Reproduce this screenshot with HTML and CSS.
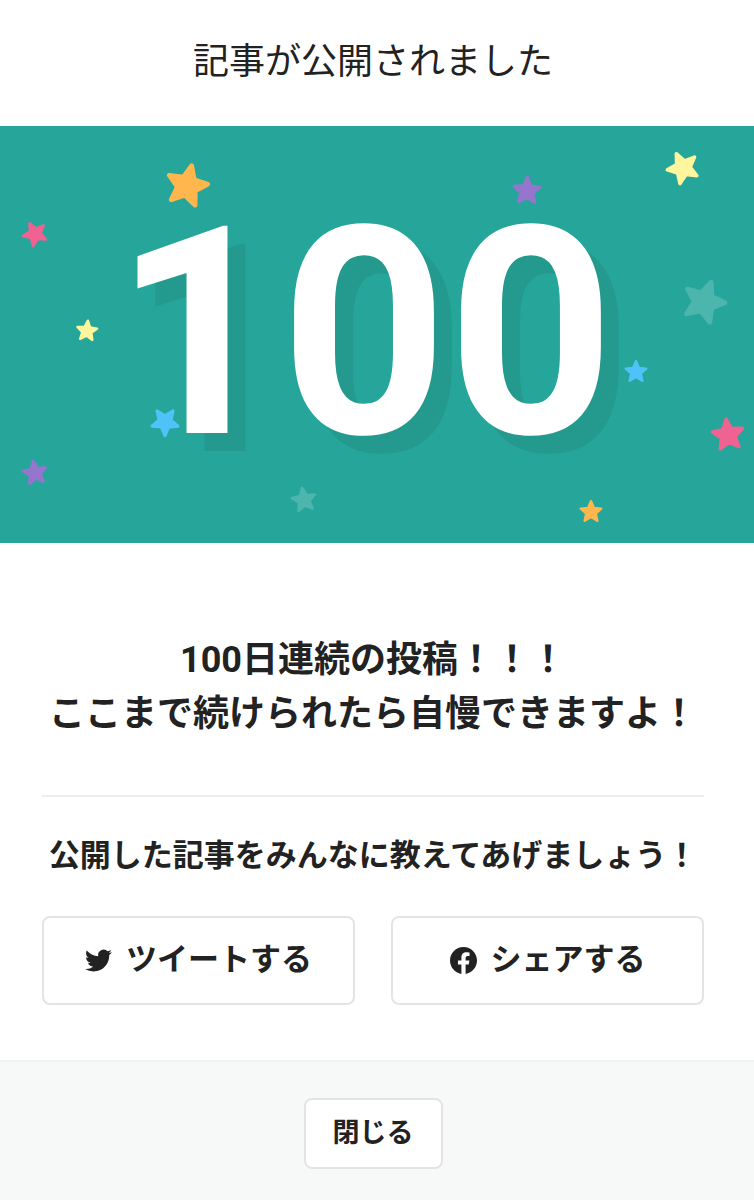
FILE: index.html
```
<!DOCTYPE html>
<html lang="ja">
<head>
    <meta charset="UTF-8">
    <meta name="viewport" content="width=device-width, initial-scale=1.0">
    <title>記事が公開されました</title>
    <link rel="stylesheet" href="styles.css">
</head>
<body>
    <main class="modal">
        <header class="modal-header">
            <h1>記事が公開されました</h1>
        </header>

        <div class="banner">
            <svg class="stars" viewBox="0 0 754 417" preserveAspectRatio="xMidYMid slice" aria-hidden="true">
                <defs>
                    <path id="star" d="M0-18 4.9-6.7 17.1-5.6 7.9 2.6 10.6 14.6 0 8.3-10.6 14.6-7.9 2.6-17.1-5.6-4.9-6.7z"/>
                </defs>
                <use href="#star" class="orange" transform="translate(187 60) rotate(13) scale(1.16)"/>
                <use href="#star" class="pink" transform="translate(35 108) rotate(-27) scale(.67)"/>
                <use href="#star" class="purple" transform="translate(527 65) rotate(2) scale(.76)"/>
                <use href="#star" class="yellow" transform="translate(683 42) rotate(-25) scale(.88)"/>
                <use href="#star" class="pale" transform="translate(704 176) rotate(20) scale(1.17)"/>
                <use href="#star" class="yellow" transform="translate(87 205) rotate(5) scale(.58)"/>
                <use href="#star" class="blue" transform="translate(165 296) rotate(36) scale(.76)"/>
                <use href="#star" class="purple" transform="translate(35 347) rotate(-9) scale(.67)"/>
                <use href="#star" class="pale" transform="translate(304 374) rotate(-9) scale(.67)"/>
                <use href="#star" class="blue" transform="translate(636 246) scale(.6)"/>
                <use href="#star" class="pink" transform="translate(728 309) rotate(-7) scale(.88)"/>
                <use href="#star" class="orange" transform="translate(591 386) scale(.6)"/>
            </svg>
            <p class="count">100</p>
        </div>

        <section class="content">
            <h2>100日連続の投稿！！！<br>ここまで続けられたら自慢できますよ！</h2>

            <div class="share">
                <h3>公開した記事をみんなに教えてあげましょう！</h3>
                <div class="share-buttons">
                    <button type="button" class="button">
                        <svg class="icon" viewBox="0 0 24 24" aria-hidden="true">
                            <path d="M23.953 4.57a10 10 0 01-2.825.775 4.958 4.958 0 002.163-2.723c-.951.555-2.005.959-3.127 1.184a4.92 4.92 0 00-8.384 4.482C7.69 8.095 4.067 6.13 1.64 3.162a4.822 4.822 0 00-.666 2.475c0 1.71.87 3.213 2.188 4.096a4.904 4.904 0 01-2.228-.616v.06a4.923 4.923 0 003.946 4.827 4.996 4.996 0 01-2.212.085 4.936 4.936 0 004.604 3.417 9.867 9.867 0 01-6.102 2.105c-.39 0-.779-.023-1.17-.067a13.995 13.995 0 007.557 2.209c9.053 0 13.998-7.496 13.998-13.985 0-.21 0-.42-.015-.63A9.935 9.935 0 0024 4.59z"/>
                        </svg>
                        ツイートする
                    </button>
                    <button type="button" class="button">
                        <svg class="icon" viewBox="0 0 24 24" aria-hidden="true">
                            <path d="M24 12.073c0-6.627-5.373-12-12-12s-12 5.373-12 12c0 5.99 4.388 10.954 10.125 11.854v-8.385H7.078v-3.47h3.047V9.43c0-3.007 1.792-4.669 4.533-4.669 1.312 0 2.686.235 2.686.235v2.953H15.83c-1.491 0-1.956.925-1.956 1.874v2.25h3.328l-.532 3.47h-2.796v8.385C19.612 23.027 24 18.062 24 12.073z"/>
                        </svg>
                        シェアする
                    </button>
                </div>
            </div>
        </section>

        <footer class="modal-footer">
            <button type="button" class="button button-close">閉じる</button>
        </footer>
    </main>
</body>
</html>
```
FILE: styles.css
```
* {
    box-sizing: border-box;
}

body {
    margin: 0;
    font-family: Roboto, "Noto Sans CJK JP", sans-serif;
    color: #222;
    background-color: #fff;
}

h1,
h2,
h3,
p {
    margin: 0;
}

.modal {
    display: flex;
    flex-direction: column;
    min-height: 100vh;
}

.modal-header {
    padding: 35px 50px 37px 42px;
    text-align: center;
}

h1 {
    font-size: 36px;
    font-weight: 400;
    line-height: 54px;
}

/* Banner */
.banner {
    position: relative;
    display: flex;
    justify-content: center;
    padding: 33px 26px 34px 0;
    overflow: hidden;
    background-color: #26a69a;
}

.stars {
    position: absolute;
    inset: 0;
    width: 100%;
    height: 100%;
    stroke-width: 4px;
    stroke-linejoin: round;
}

.orange { fill: #ffb74d; stroke: #ffb74d; }
.pink { fill: #f06292; stroke: #f06292; }
.purple { fill: #9575cd; stroke: #9575cd; }
.yellow { fill: #fff59d; stroke: #fff59d; }
.blue { fill: #4fc3f7; stroke: #4fc3f7; }
.pale { fill: #4db6ac; stroke: #4db6ac; }

.count {
    position: relative;
    font-size: 291px;
    font-weight: 700;
    line-height: 350px;
    color: #fff;
    text-shadow: 18px 18px 0 #24998d;
}

/* Message and share buttons */
.content {
    padding: 90px 50px 55px 42px;
    text-align: center;
}

h2 {
    font-size: 36px;
    font-weight: 700;
    line-height: 54px;
    white-space: nowrap;
}

.share {
    margin-top: 54px;
    padding-top: 36px;
    border-top: 2px solid #eee;
}

h3 {
    font-size: 31px;
    font-weight: 700;
    line-height: 46px;
    white-space: nowrap;
}

.share-buttons {
    display: grid;
    grid-template-columns: 1fr 1fr;
    gap: 36px;
    margin-top: 37px;
}

.button {
    display: flex;
    justify-content: center;
    align-items: center;
    gap: 14px;
    padding: 19px 0 20px;
    border: 2px solid #e4e4e4;
    border-radius: 8px;
    background-color: #fff;
    color: #222;
    font-family: inherit;
    font-size: 31px;
    font-weight: 700;
    line-height: 46px;
    cursor: pointer;
}

.icon {
    width: 27px;
    height: 27px;
    fill: currentColor;
}

.modal-footer {
    display: flex;
    flex-grow: 1;
    justify-content: center;
    align-items: flex-start;
    padding: 36px 8px 31px 0;
    border-top: 2px solid #f0f0f0;
    background-color: #f7f9f9;
}

.button-close {
    padding: 14px 27px;
    font-size: 27px;
    line-height: 39px;
}
```
